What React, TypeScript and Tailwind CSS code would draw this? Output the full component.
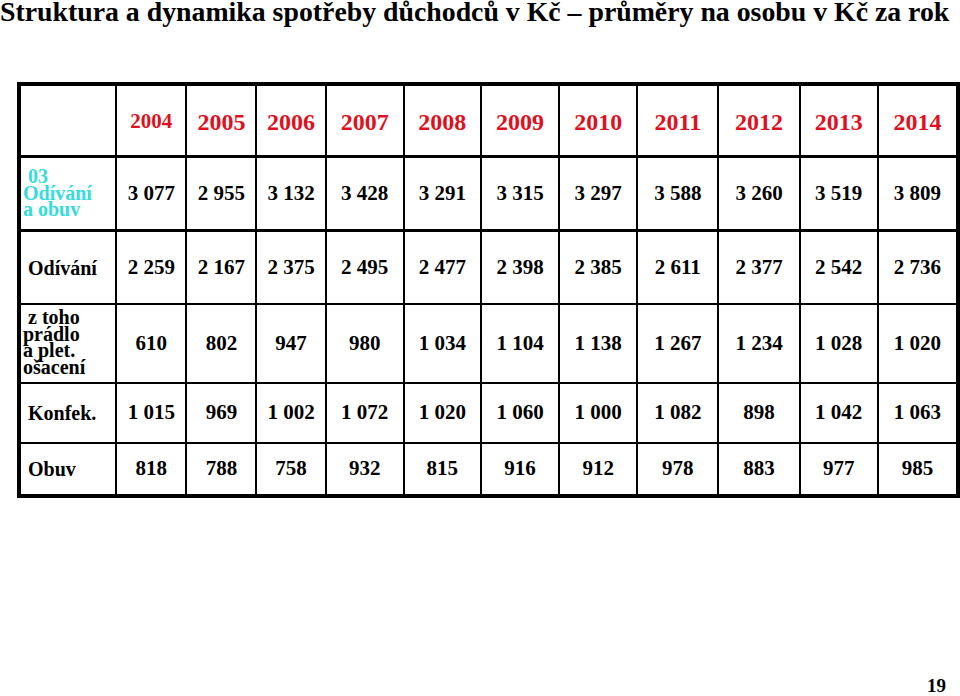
const years = ["2004", "2005", "2006", "2007", "2008", "2009", "2010", "2011", "2012", "2013", "2014"];

const colWidths = [
  "w-[97px]", "w-[70px]", "w-[70px]", "w-[69px]", "w-[78px]", "w-[77px]",
  "w-[78px]", "w-[78px]", "w-[81px]", "w-[81px]", "w-[78px]", "w-[80px]",
];

type Row = {
  label: string[];
  cyan?: boolean;
  values: string[];
  height: string;
  border: string;
};

const rows: Row[] = [
  {
    label: ["\u00a003", "Odívání", "a obuv"],
    cyan: true,
    values: ["3 077", "2 955", "3 132", "3 428", "3 291", "3 315", "3 297", "3 588", "3 260", "3 519", "3 809"],
    height: "h-[74px]",
    border: "border-b-[3px]",
  },
  {
    label: ["\u00a0Odívání"],
    values: ["2 259", "2 167", "2 375", "2 495", "2 477", "2 398", "2 385", "2 611", "2 377", "2 542", "2 736"],
    height: "h-[73px]",
    border: "border-b-2",
  },
  {
    label: ["\u00a0z toho", "prádlo", "a plet.", "ošacení"],
    values: ["610", "802", "947", "980", "1 034", "1 104", "1 138", "1 267", "1 234", "1 028", "1 020"],
    height: "h-[79px]",
    border: "border-b-2",
  },
  {
    label: ["\u00a0Konfek."],
    values: ["1 015", "969", "1 002", "1 072", "1 020", "1 060", "1 000", "1 082", "898", "1 042", "1 063"],
    height: "h-[60px]",
    border: "border-b-2",
  },
  {
    label: ["\u00a0Obuv"],
    values: ["818", "788", "758", "932", "815", "916", "912", "978", "883", "977", "985"],
    height: "h-[53px]",
    border: "border-b-2",
  },
];

export default function App() {
  return (
    <div className="flex h-[696px] w-[960px] flex-col overflow-hidden bg-white [font-family:Liberation_Serif,'Times_New_Roman',serif] font-bold text-black">
      <h1 className="-mt-[2px] whitespace-nowrap text-[27.8px] leading-none">
        Struktura a dynamika spotřeby důchodců v Kč – průměry na osobu v Kč za rok
      </h1>

      <table className="ml-[17px] mt-[56px] table-fixed border-collapse border-4 border-black">
        <colgroup>
          {colWidths.map((w, i) => (
            <col key={i} className={w} />
          ))}
        </colgroup>
        <tbody>
          <tr className="h-[73px]">
            <td className="border-2 border-b-[3px] border-black"></td>
            {years.map((y, i) => (
              <td
                key={y}
                className={
                  "border-2 border-b-[3px] border-black pt-[2px] text-center text-[#e01020] " +
                  (i === 0 ? "text-[21px]" : "text-[24px]")
                }
              >
                {y}
              </td>
            ))}
          </tr>
          {rows.map((r, ri) => (
            <tr key={ri} className={r.height}>
              <td
                className={
                  "border-2 border-black pl-[2px] text-[20px] " +
                  r.border +
                  (r.label.length > 1 ? " pb-[2px] leading-[16.4px]" : " leading-normal") +
                  (r.cyan ? " text-[#35dcdc]" : "")
                }
              >
                {r.label.map((l, li) => (
                  <div key={li} className="whitespace-pre">
                    {l}
                  </div>
                ))}
              </td>
              {r.values.map((v, vi) => (
                <td key={vi} className={"border-2 border-black text-center text-[21px] " + r.border}>
                  {v}
                </td>
              ))}
            </tr>
          ))}
        </tbody>
      </table>

      <div className="flex-1" />
      <div className="flex justify-end pb-[1px] pr-[14px] text-[19px] leading-none">19</div>
    </div>
  );
}
